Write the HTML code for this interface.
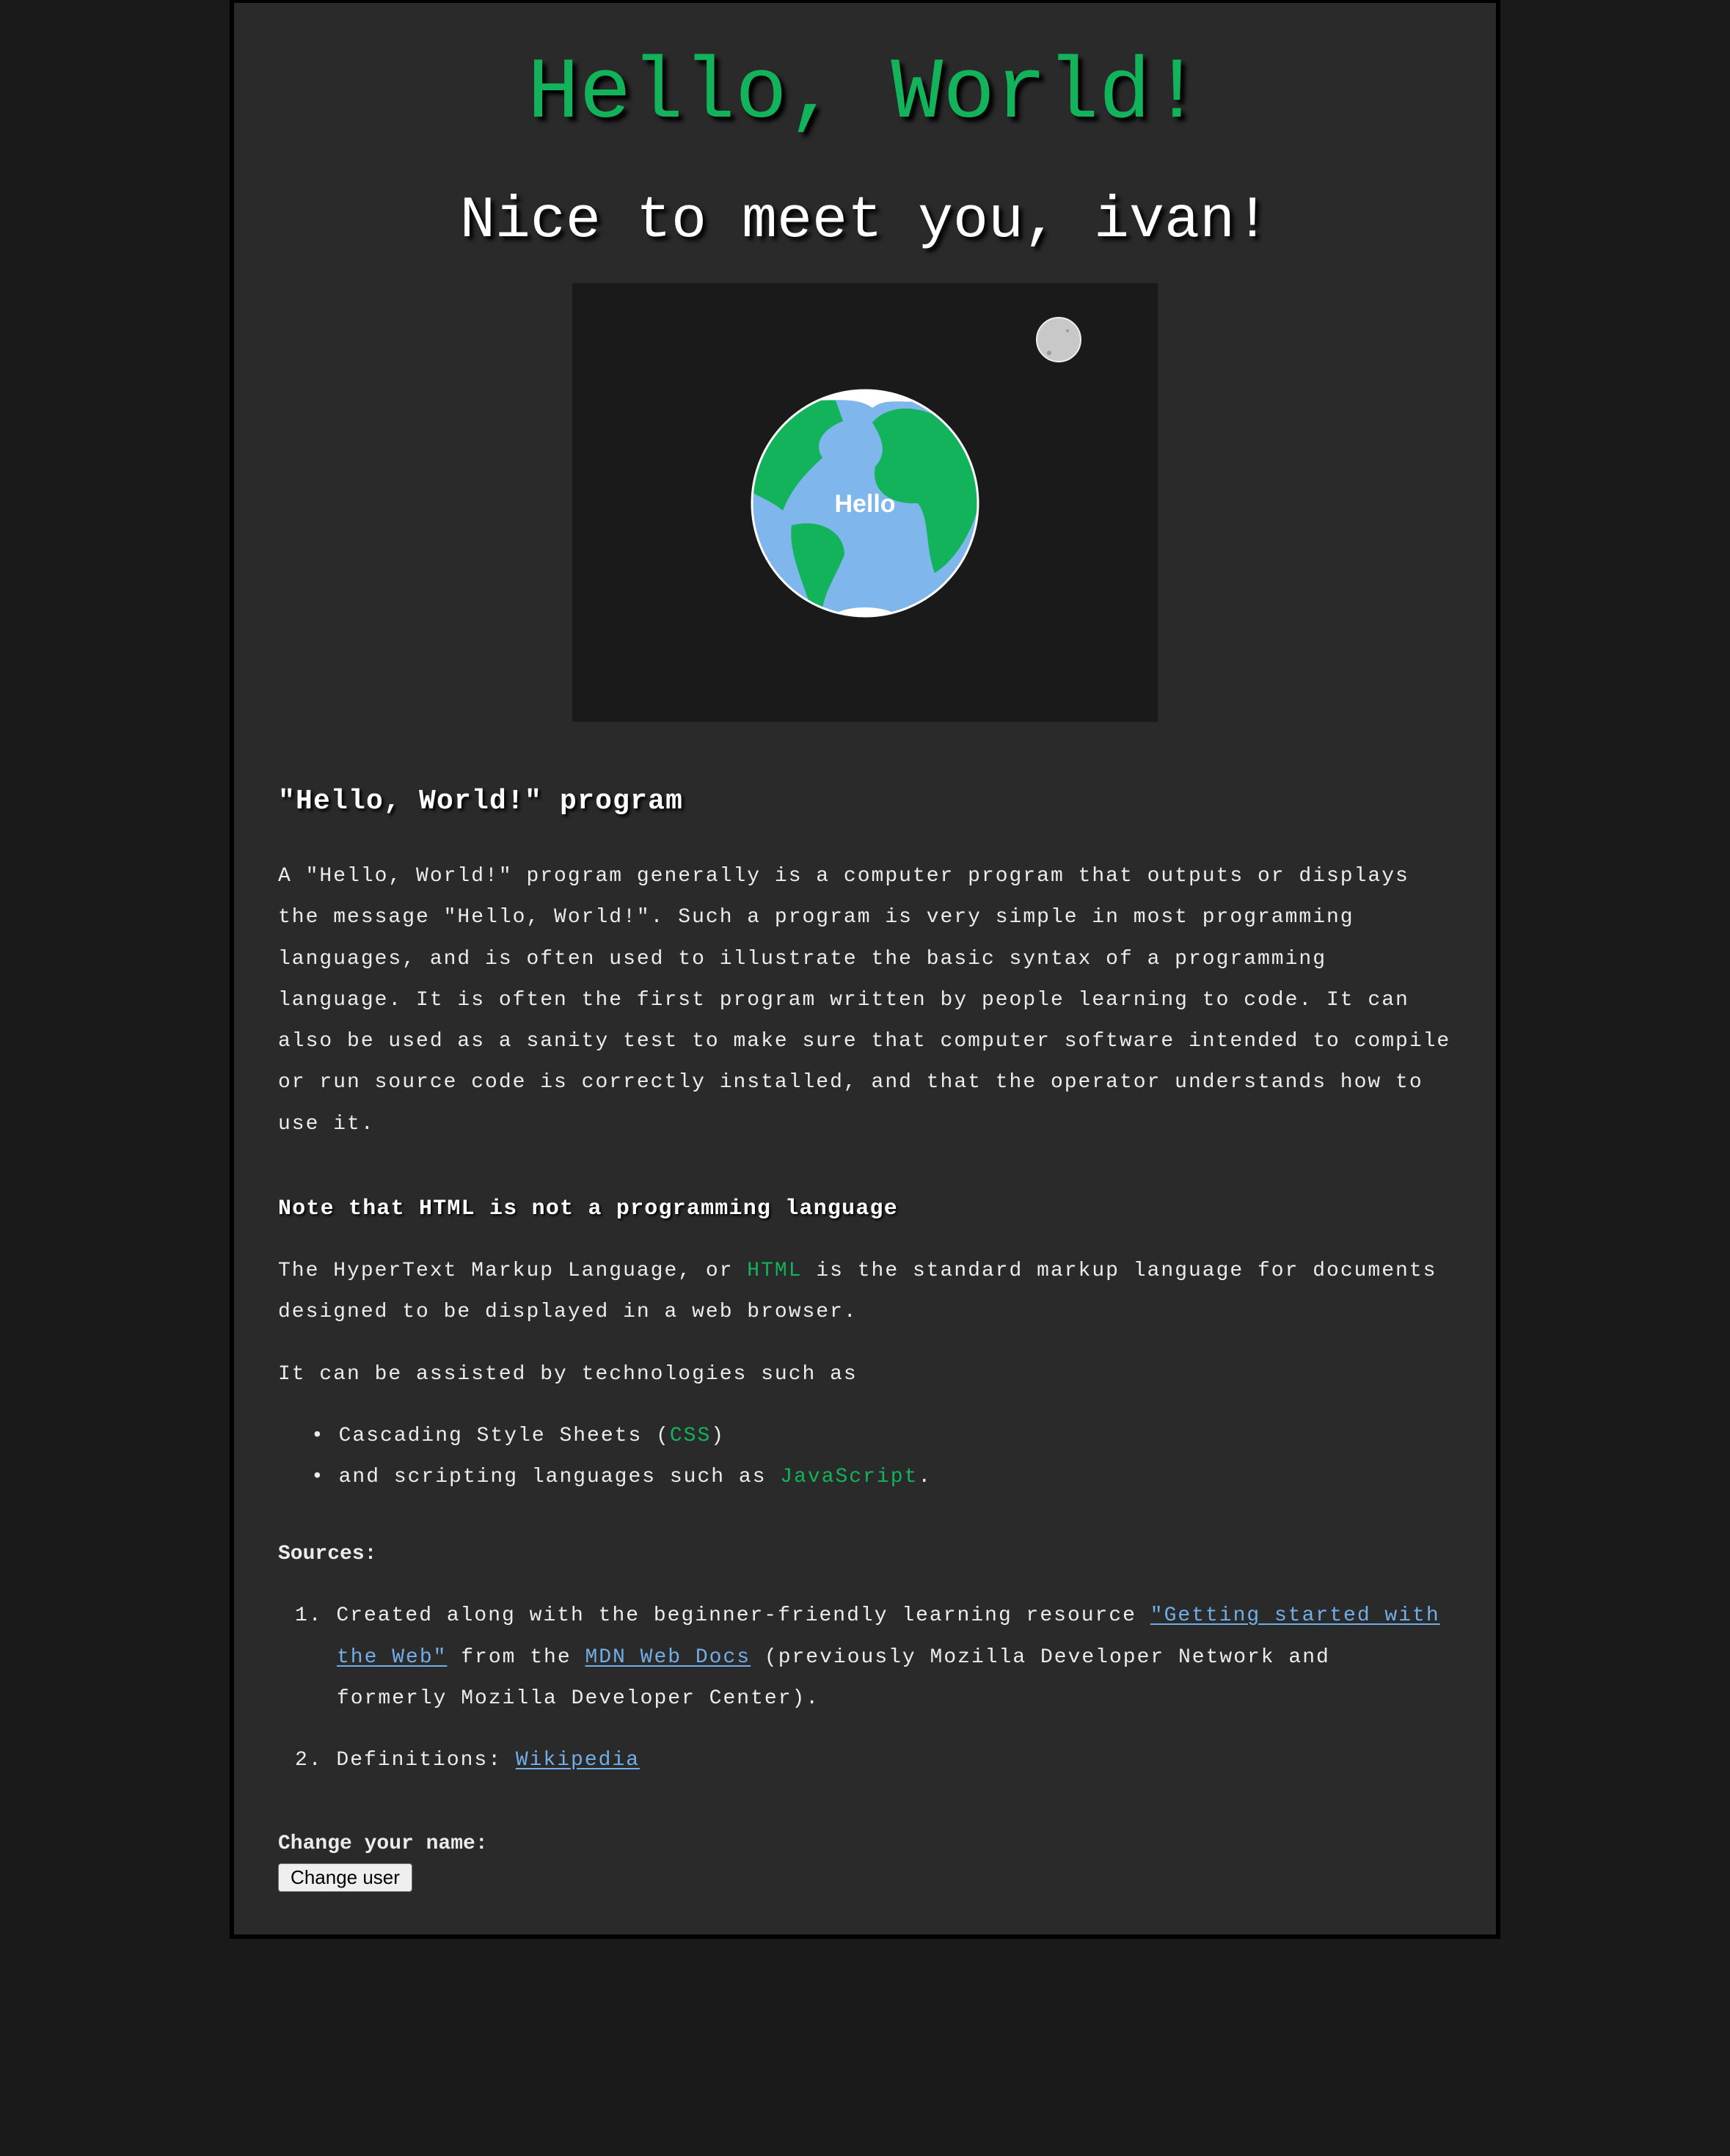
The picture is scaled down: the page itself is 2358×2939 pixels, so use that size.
<!DOCTYPE html>
<html><head><meta charset="utf-8"><style>
html,body{margin:0;padding:0;background:#1a1a1a;}
body{width:2358px;height:2939px;position:relative;overflow:hidden;font-family:"Liberation Mono",monospace;color:#ececec;}
#box{position:absolute;left:313px;top:0;width:1720px;height:2633px;background:#2a2a2a;border:6px solid #000;border-top:4px solid #000;}
.t{position:absolute;white-space:nowrap;line-height:1;}
.b{font-size:28px;letter-spacing:2px;left:379px;}
.g{color:#12b35a;}
a{color:#72aee8;text-decoration:underline;text-underline-offset:4px;}
</style></head><body>
<div id="box"></div>
<div class="t" style="left:0;width:2358px;text-align:center;top:70px;font-size:118px;color:#12b35a;text-shadow:6px 6px 6px #000;">Hello, World!</div>
<div class="t" style="left:0;width:2358px;text-align:center;top:262px;font-size:80px;color:#fff;text-shadow:5px 5px 6px #000;">Nice to meet you, ivan!</div>
<svg style="position:absolute;left:780px;top:386px" width="798" height="598" viewBox="0 0 798 598">
<rect width="798" height="598" fill="#1a1a1a"/>
<circle cx="663" cy="77" r="30" fill="#c8c8c8" stroke="#eee" stroke-width="2"/>
<circle cx="650" cy="95" r="3" fill="#999"/><circle cx="675" cy="65" r="2" fill="#999"/>
<g transform="translate(399,300)">
<defs><clipPath id="c"><circle r="154"/></clipPath></defs>
<circle r="154" fill="#7fb6ec"/>
<g clip-path="url(#c)" fill="#12b35a">
<path d="M -160,-60 C -130,-115 -90,-145 -40,-140 L -30,-112 C -60,-100 -70,-80 -58,-62 C -82,-40 -100,-20 -112,10 C -130,-5 -150,-10 -160,-20 Z"/>
<path d="M -100,30 C -60,20 -28,40 -28,70 C -40,100 -55,120 -58,145 L -72,150 C -82,110 -105,70 -100,30 Z"/>
<path d="M 10,-110 C 40,-145 110,-130 140,-80 L 160,-20 C 150,40 120,80 95,95 C 82,60 88,20 72,0 C 30,2 8,-20 14,-50 C 32,-70 22,-90 10,-110 Z"/>
</g>
<g clip-path="url(#c)" fill="#fff">
<path d="M -80,-150 C -50,-165 50,-165 80,-140 C 50,-135 30,-145 10,-130 C -10,-145 -40,-140 -80,-140 Z"/>
<ellipse cx="0" cy="162" rx="50" ry="20"/>
</g>
<circle r="154" fill="none" stroke="#fff" stroke-width="3"/>
<text x="0" y="12" text-anchor="middle" font-family="Liberation Sans,sans-serif" font-weight="bold" font-size="34" fill="#fff">Hello</text>
</g>
</svg>
<div class="t" style="left:379px;top:1074px;font-size:38px;font-weight:bold;letter-spacing:1.2px;color:#fff;text-shadow:3px 3px 4px #000;">"Hello, World!" program</div>
<div class="t b" style="top:1181px">A "Hello, World!" program generally is a computer program that outputs or displays</div>
<div class="t b" style="top:1237px">the message "Hello, World!". Such a program is very simple in most programming</div>
<div class="t b" style="top:1294px">languages, and is often used to illustrate the basic syntax of a programming</div>
<div class="t b" style="top:1350px">language. It is often the first program written by people learning to code. It can</div>
<div class="t b" style="top:1406px">also be used as a sanity test to make sure that computer software intended to compile</div>
<div class="t b" style="top:1462px">or run source code is correctly installed, and that the operator understands how to</div>
<div class="t b" style="top:1519px">use it.</div>
<div class="t" style="left:379px;top:1633px;font-size:30px;font-weight:bold;letter-spacing:1.2px;color:#fff;text-shadow:2px 2px 3px #000;">Note that HTML is not a programming language</div>
<div class="t b" style="top:1719px">The HyperText Markup Language, or <span class="g">HTML</span> is the standard markup language for documents</div>
<div class="t b" style="top:1775px">designed to be displayed in a web browser.</div>
<div class="t b" style="top:1860px">It can be assisted by technologies such as</div>
<div class="t b" style="top:1944px;left:424px">• Cascading Style Sheets (<span class="g">CSS</span>)</div>
<div class="t b" style="top:2000px;left:424px">• and scripting languages such as <span class="g">JavaScript</span>.</div>
<div class="t b" style="top:2105px;font-weight:bold;letter-spacing:0">Sources:</div>
<div class="t b" style="top:2189px;left:402px">1. Created along with the beginner-friendly learning resource <a>"Getting started with</a></div>
<div class="t b" style="top:2246px;left:459px"><a>the Web"</a> from the <a>MDN Web Docs</a> (previously Mozilla Developer Network and</div>
<div class="t b" style="top:2302px;left:459px">formerly Mozilla Developer Center).</div>
<div class="t b" style="top:2386px;left:402px">2. Definitions: <a>Wikipedia</a></div>
<div class="t b" style="top:2500px;font-weight:bold;letter-spacing:0">Change your name:</div>
<div class="t" style="left:379px;top:2540px;width:181px;height:37px;background:#efefef;border:1px solid #767676;border-radius:4px;font-family:'Liberation Sans',sans-serif;font-size:26px;color:#000;text-align:center;line-height:37px;">Change user</div>
</body></html>
